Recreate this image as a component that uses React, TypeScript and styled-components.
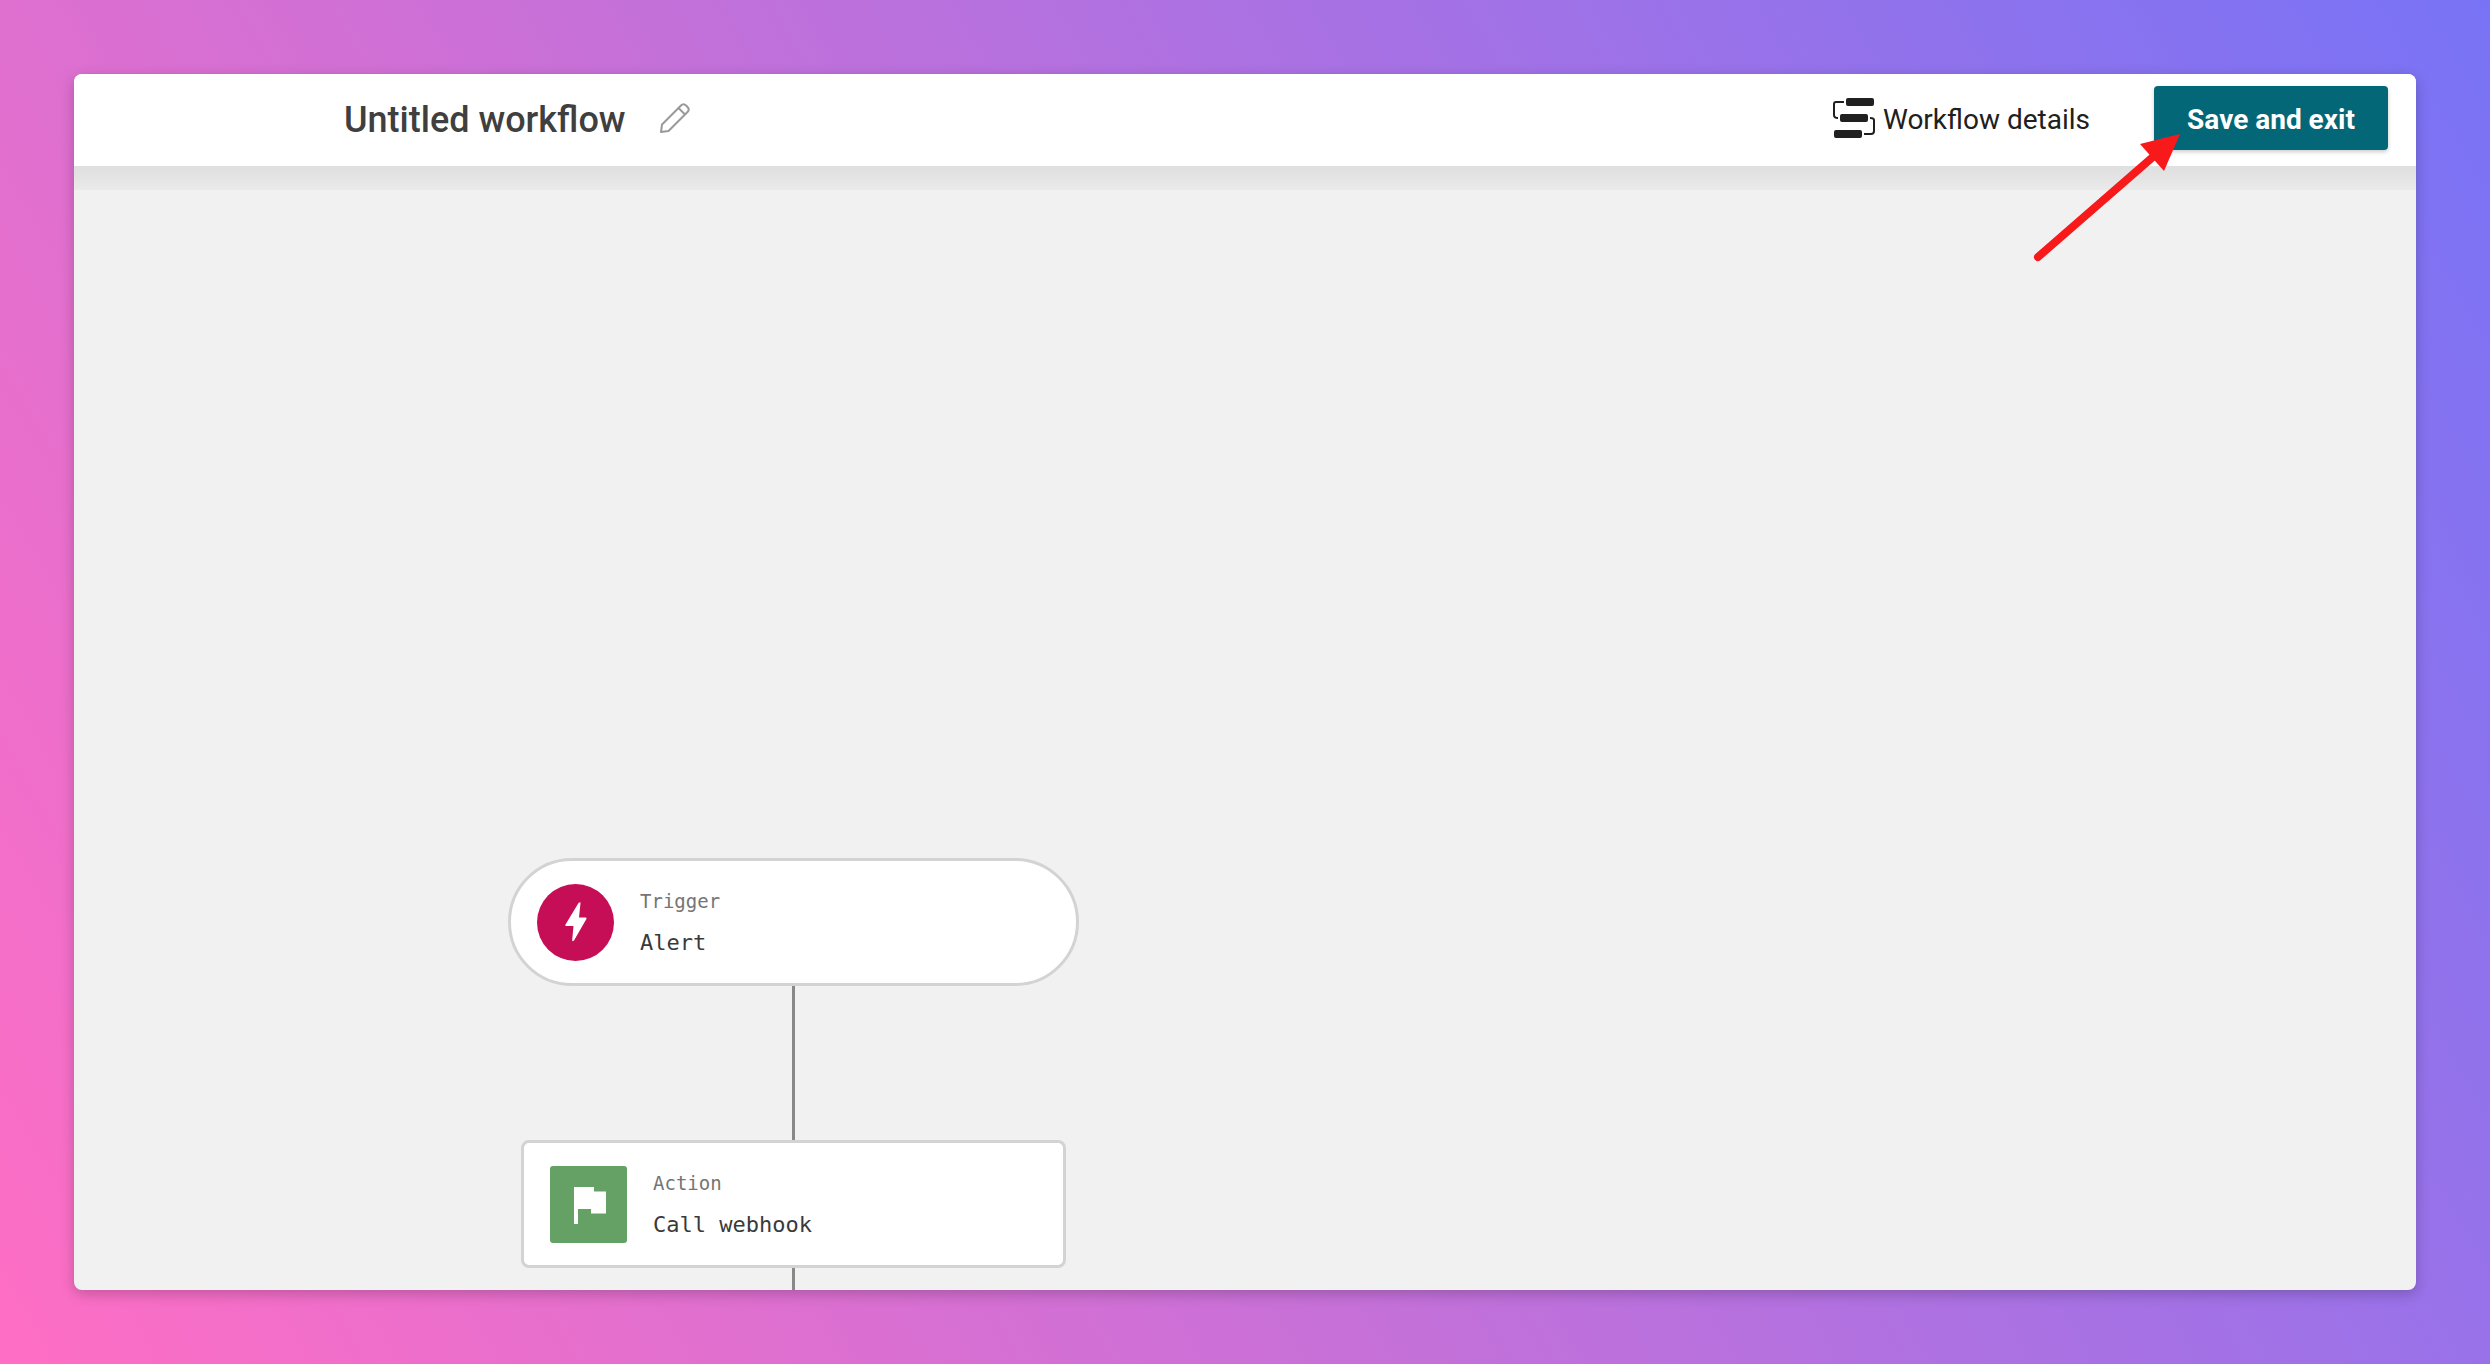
import React from "react";
import styled, { createGlobalStyle, css } from "styled-components";

const sans = `Roboto, "Liberation Sans", sans-serif`;
const mono = `"DejaVu Sans Mono", "Liberation Mono", monospace`;

const GlobalStyle = createGlobalStyle`
  *, *::before, *::after { box-sizing: border-box; }
  body { margin: 0; font-family: ${sans}; }
`;

const Backdrop = styled.div`
  display: flex;
  min-height: 100vh;
  padding: 74px;
  background: linear-gradient(60deg, #ff6ec4, #7873f5);
`;

const Window = styled.div`
  display: flex;
  flex: 1;
  flex-direction: column;
  min-width: 0;
  border-radius: 8px;
  background: #f1f1f1;
  box-shadow: 0 4px 14px rgba(0, 0, 0, 0.22);
`;

const Header = styled.header`
  display: flex;
  align-items: center;
  justify-content: space-between;
  height: 92px;
  padding: 0 28px 4px 270px;
  border-radius: 8px 8px 0 0;
  background: #fff;
`;

const HeaderGroup = styled.div<{ $gap: number }>`
  display: flex;
  align-items: center;
  gap: ${(p) => p.$gap}px;
`;

const Title = styled.h1`
  margin: 0;
  padding-top: 4px;
  color: #3f3f3f;
  font-size: 36px;
  font-weight: 500;
  line-height: 44px;
`;

const PlainButton = styled.button`
  display: flex;
  align-items: center;
  gap: 8px;
  padding: 0;
  border: 0;
  background: none;
  color: #202020;
  font: 400 28px/32px ${sans};
  cursor: pointer;
`;

const ButtonLabel = styled.span`
  display: block;
  padding-top: 4px;
`;

const SaveButton = styled.button`
  position: relative;
  min-width: 234px;
  height: 64px;
  padding: 0 32px;
  border: 0;
  border-radius: 4px;
  background: #036778;
  box-shadow: 0 2px 4px rgba(0, 0, 0, 0.2);
  color: #fff;
  font: 700 28px/32px ${sans};
  cursor: pointer;
`;

const Arrow = styled.svg`
  position: absolute;
  top: 44px;
  left: -122px;
  pointer-events: none;
`;

const HeaderShade = styled.div`
  height: 24px;
  background: linear-gradient(#dfdfdf, #eaeaea);
`;

const Canvas = styled.main`
  display: flex;
  flex: 1;
  flex-direction: column;
  padding: 668px 0 0 434px;
`;

const Flow = styled.div`
  display: flex;
  flex: 1;
  flex-direction: column;
  align-items: center;
  width: 571px;
`;

const Node = styled.section<{ $kind: "trigger" | "action" }>`
  display: flex;
  align-items: center;
  gap: 26px;
  height: 128px;
  padding: 0 26px;
  border: 3px solid #d3d3d3;
  background: #fff;
  ${(p) =>
    p.$kind === "trigger"
      ? css`
          width: 100%;
          border-radius: 64px;
        `
      : css`
          width: 545px;
          border-radius: 8px;
        `}
`;

const NodeIcon = styled.div<{ $kind: "trigger" | "action" }>`
  display: flex;
  align-items: center;
  justify-content: center;
  width: 77px;
  height: 77px;
  border-radius: ${(p) => (p.$kind === "trigger" ? "50%" : "3px")};
  background: ${(p) => (p.$kind === "trigger" ? "#c60e56" : "#65a165")};
`;

const NodeText = styled.div`
  display: flex;
  flex-direction: column;
  gap: 14px;
  font-family: ${mono};
`;

const NodeKind = styled.span`
  color: #757575;
  font-size: 19px;
  line-height: 28px;
`;

const NodeName = styled.span`
  color: #3a3a3a;
  font-size: 22px;
  line-height: 28px;
`;

const Connector = styled.div<{ $fill?: boolean }>`
  width: 3px;
  background: #888;
  ${(p) => (p.$fill ? "flex: 1;" : "height: 154px;")}
`;

const PencilIcon = () => (
  <svg width="30" height="30" viewBox="0 0 30 30" fill="none" stroke="#999" strokeWidth="2" strokeLinejoin="round" aria-hidden="true">
    <path d="M1 29L2 21.500L21 2.500q2.500-2.500 5 0l1.500 1.500q2.500 2.500 0 5L8.500 28z" />
    <path d="M18.500 5L25 11.500" />
  </svg>
);

const WorkflowIcon = () => (
  <svg width="42" height="40" viewBox="0 0 42 40" fill="#202020" aria-hidden="true">
    <rect x="13" y="0" width="28" height="8" rx="2" />
    <rect x="7" y="16" width="28" height="8" rx="2" />
    <rect x="1" y="32" width="28" height="8" rx="2" />
    <g fill="none" stroke="#202020" strokeWidth="2">
      <path d="M11 4H3Q1 4 1 6V17Q1 20 5 20" />
      <path d="M37 20Q41 20 41 22V33Q41 36 38 36H31" />
    </g>
  </svg>
);

const BoltIcon = () => (
  <svg width="22" height="40" viewBox="0 0 22 40" fill="#fff" aria-hidden="true">
    <path d="M13.500 1Q15.500-.5 15.500 1L14 15.500H20.500Q22 15.500 21.400 17L9 38.500Q7 40 7.200 38L8.500 24H1Q0 24 .5 22.500z" />
  </svg>
);

const FlagIcon = () => (
  <svg width="34" height="40" viewBox="0 0 34 40" fill="#fff" aria-hidden="true">
    <path d="M2 3H22V7.500H34V29.500H19V25H6V40H2z" />
  </svg>
);

export default function App() {
  return (
    <>
      <GlobalStyle />
      <Backdrop>
        <Window>
          <Header>
            <HeaderGroup $gap={34}>
              <Title>Untitled workflow</Title>
              <PlainButton aria-label="Rename workflow">
                <PencilIcon />
              </PlainButton>
            </HeaderGroup>
            <HeaderGroup $gap={64}>
              <PlainButton>
                <WorkflowIcon />
                <ButtonLabel>Workflow details</ButtonLabel>
              </PlainButton>
              <SaveButton>
                <ButtonLabel>Save and exit</ButtonLabel>
                <Arrow width="150" height="134" viewBox="0 0 150 134" aria-hidden="true">
                  <path d="M6 127L122 26" stroke="#f81a1a" strokeWidth="8" strokeLinecap="round" />
                  <path d="M148 4L108 14L132 41z" fill="#f81a1a" />
                </Arrow>
              </SaveButton>
            </HeaderGroup>
          </Header>
          <HeaderShade />
          <Canvas>
            <Flow>
              <Node $kind="trigger">
                <NodeIcon $kind="trigger">
                  <BoltIcon />
                </NodeIcon>
                <NodeText>
                  <NodeKind>Trigger</NodeKind>
                  <NodeName>Alert</NodeName>
                </NodeText>
              </Node>
              <Connector />
              <Node $kind="action">
                <NodeIcon $kind="action">
                  <FlagIcon />
                </NodeIcon>
                <NodeText>
                  <NodeKind>Action</NodeKind>
                  <NodeName>Call webhook</NodeName>
                </NodeText>
              </Node>
              <Connector $fill />
            </Flow>
          </Canvas>
        </Window>
      </Backdrop>
    </>
  );
}
